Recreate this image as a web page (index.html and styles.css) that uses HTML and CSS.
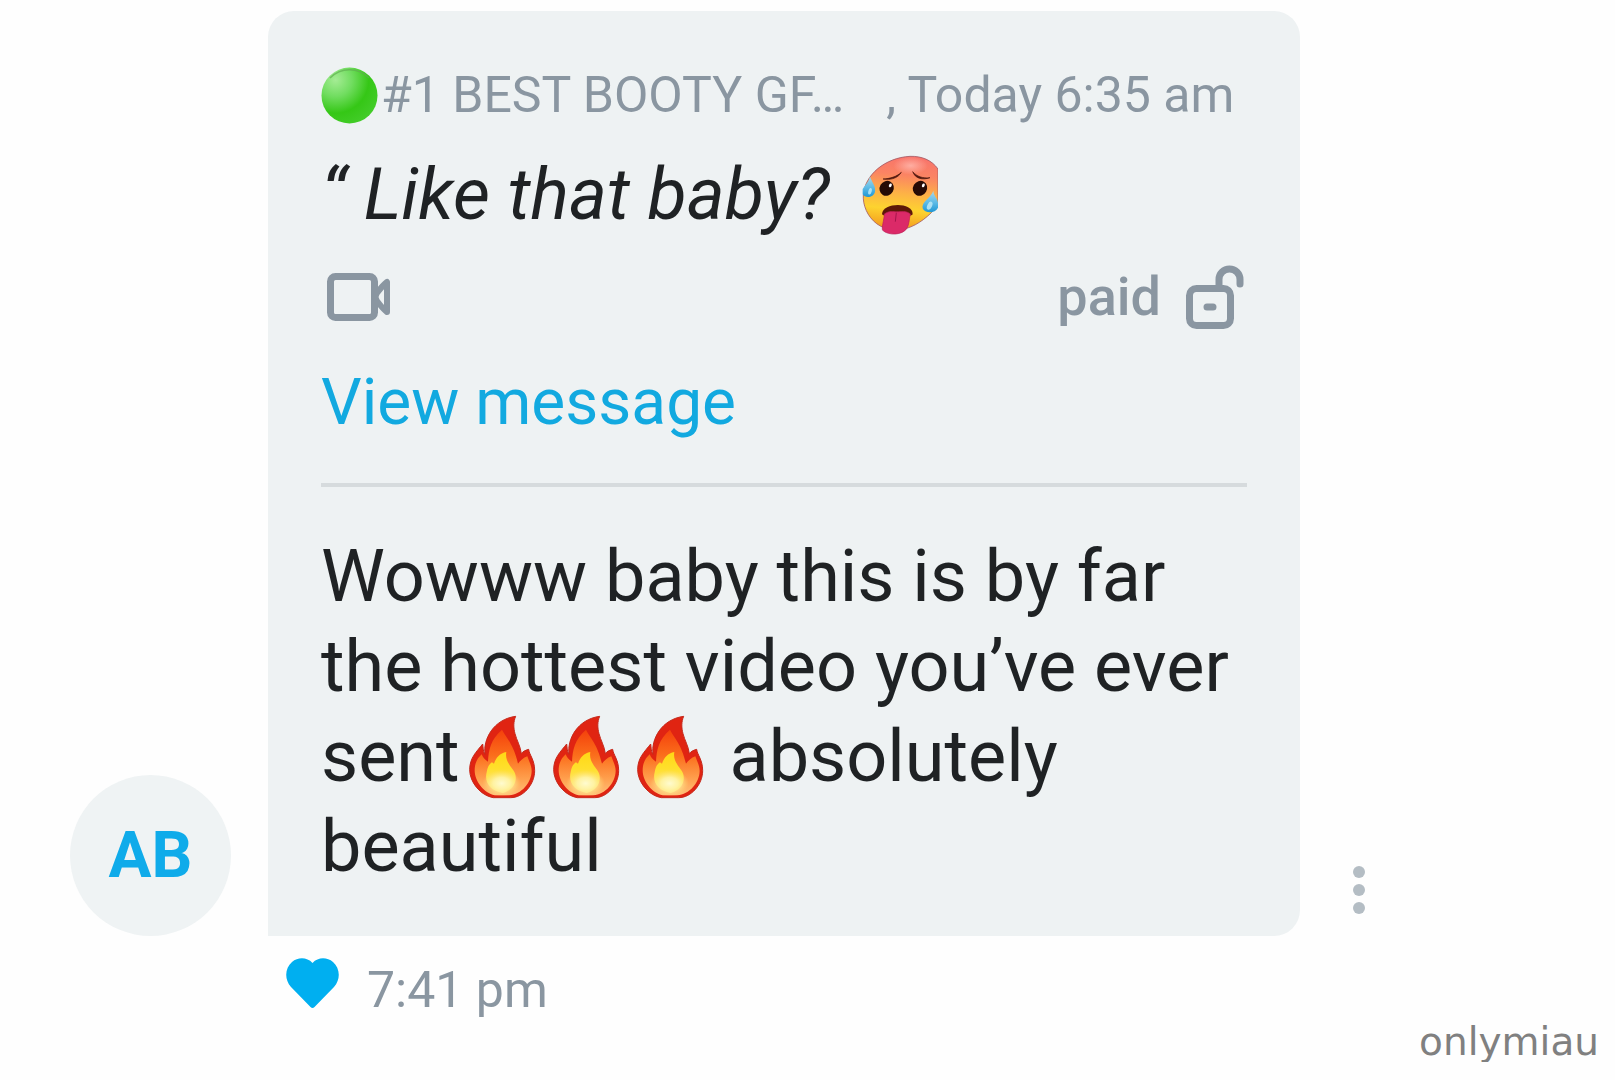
FILE: index.html
```html
<!DOCTYPE html>
<html lang="en">
<head>
<meta charset="utf-8">
<meta name="viewport" content="width=device-width, initial-scale=1">
<title>Messages</title>
<link rel="stylesheet" href="styles.css">
</head>
<body>
<svg class="defs" aria-hidden="true">
  <defs>
    <radialGradient id="ball" cx="0.25" cy="0.22" r="0.85">
      <stop offset="0" stop-color="#a5ec95"/>
      <stop offset="0.35" stop-color="#71dd60"/>
      <stop offset="0.7" stop-color="#35c716"/>
      <stop offset="1" stop-color="#42cc28"/>
    </radialGradient>
    <linearGradient id="face" x1="0.55" y1="0" x2="0.45" y2="1">
      <stop offset="0" stop-color="#f8746b"/>
      <stop offset="0.25" stop-color="#fb8463"/>
      <stop offset="0.5" stop-color="#fdb246"/>
      <stop offset="0.72" stop-color="#fdd32f"/>
      <stop offset="1" stop-color="#f2971c"/>
    </linearGradient>
    <radialGradient id="shine" cx="0.5" cy="0.5" r="0.5">
      <stop offset="0" stop-color="#ffb3a8" stop-opacity="0.9"/>
      <stop offset="1" stop-color="#ffb3a8" stop-opacity="0"/>
    </radialGradient>
    <linearGradient id="drop" x1="0" y1="0" x2="0" y2="1">
      <stop offset="0" stop-color="#a9d8ea"/>
      <stop offset="0.55" stop-color="#5dbbe6"/>
      <stop offset="1" stop-color="#1f97d4"/>
    </linearGradient>
    <linearGradient id="flame-mid" x1="0" y1="0" x2="0" y2="1">
      <stop offset="0" stop-color="#f4400c"/>
      <stop offset="0.4" stop-color="#fb6f1c"/>
      <stop offset="0.75" stop-color="#ffa04e"/>
      <stop offset="1" stop-color="#ffc07a"/>
    </linearGradient>
    <linearGradient id="flame-core" x1="0" y1="0" x2="0" y2="1">
      <stop offset="0" stop-color="#ffd814"/>
      <stop offset="0.4" stop-color="#ffdf2c"/>
      <stop offset="1" stop-color="#ffe98c"/>
    </linearGradient>
    <radialGradient id="flame-glow" cx="0.5" cy="0.5" r="0.5">
      <stop offset="0" stop-color="#fffbd0"/>
      <stop offset="0.45" stop-color="#fff4a8" stop-opacity="0.9"/>
      <stop offset="1" stop-color="#ffe070" stop-opacity="0"/>
    </radialGradient>
    <symbol id="flame" viewBox="0 42 252 252">
      <path d="M167 46C160 62 160 80 165 98C170 118 181 134 184 158C188 152 195 148 206 145C208 162 224 176 224 209C224 250 190 290 152 290H100C62 284 29 244 29 206C29 170 50 152 68 129C70 138 68 150 75 160C69 115 100 55 167 46Z" fill="#e02412" stroke="#c52a1c" stroke-width="3"/>
      <path d="M126 86C138 110 160 128 174 188C180 180 190 170 202 166C206 180 215 192 215 210C214 246 184 280 148 283H104C72 276 44 242 44 208C44 184 54 170 65 160C68 168 74 176 84 182C86 146 92 116 126 86Z" fill="url(#flame-mid)"/>
      <path d="M139 153C136 170 142 182 150 194L160 208C176 230 166 266 128 276C92 270 72 246 80 214Q84 190 96 184L102 188C108 170 120 156 139 153Z" fill="url(#flame-core)"/>
      <ellipse cx="125" cy="247" rx="58" ry="40" fill="url(#flame-glow)"/>
    </symbol>
  </defs>
</svg>

<main class="chat">
  <article class="message">
    <div class="avatar">AB</div>

    <div class="bubble">
      <blockquote class="quote">
        <header class="quote-head">
          <svg class="status" viewBox="0 0 57 57" role="img" aria-label="Online">
            <circle cx="28.5" cy="28.5" r="28" fill="url(#ball)"/>
            <path d="M9 11A27 27 0 0 1 48 11" fill="none" stroke="#5fae50" stroke-width="1.5" opacity="0.7"/>
          </svg>
          <span class="name">#1 BEST BOOTY GF…</span>
          <span>, Today 6:35 am</span>
        </header>
        <p class="quote-text">“ Like that baby? <svg class="hot-face" viewBox="36 30 228 240" role="img" aria-label="Hot face">
            <path d="M180 34C215 33 245 45 264 72V180C240 212 204 240 170 250C140 260 105 255 80 236C52 215 38 180 40 150C44 90 105 38 180 34Z" fill="url(#face)" stroke="#a35b66" stroke-width="2.5"/>
            <ellipse cx="182" cy="62" rx="52" ry="27" fill="url(#shine)"/>
            <path d="M99 102C120 101 140 95 154 82C144 99 124 106 99 102ZM188 80C200 94 218 101 240 98C217 106 196 101 188 80Z" fill="#50180f" stroke="#50180f" stroke-width="2"/>
            <ellipse cx="110" cy="130" rx="21" ry="23" transform="rotate(30 110 130)" fill="#260b05"/>
            <ellipse cx="210" cy="130" rx="21" ry="23" transform="rotate(30 210 130)" fill="#260b05"/>
            <ellipse cx="121" cy="121" rx="4" ry="6" transform="rotate(25 121 121)" fill="#fff"/>
            <ellipse cx="220" cy="121" rx="4" ry="6" transform="rotate(25 220 121)" fill="#fff"/>
            <path d="M96 207C98 172 188 170 188 207C188 218 100 220 96 207Z" fill="#5c1808"/>
            <path d="M103 207C118 196 130 201 140 200C154 201 168 196 181 207C177 225 178 238 170 251C158 270 116 273 98 256C94 250 102 226 103 207Z" fill="#db2a68" stroke="#bd1d56" stroke-width="2"/>
            <path d="M139 203L136 230" stroke="#a5154b" stroke-width="3"/>
            <path d="M60 94C65 112 78 122 75 140C71 158 46 161 38 148V132C46 120 56 112 60 94Z" fill="url(#drop)"/>
            <path d="M250 137C251 153 264 162 264 174V188C256 206 224 206 218 190C213 171 242 160 250 137Z" fill="url(#drop)"/>
            <ellipse cx="239" cy="182" rx="7" ry="13" transform="rotate(25 239 182)" fill="#c4ecf8" opacity="0.8"/>
            <ellipse cx="60" cy="139" rx="5" ry="10" transform="rotate(15 60 139)" fill="#c4ecf8" opacity="0.8"/>
          </svg></p>
        <div class="media">
          <svg class="video" viewBox="0 0 64 48" role="img" aria-label="Video">
            <rect x="3.500" y="3.500" width="44" height="41" rx="5"/>
            <path d="M60 9V39C56 36 53 32 50 28Q47 24 50 20C53 16 56 12 60 9Z" stroke-width="6"/>
          </svg>
          <span class="paid">paid
            <svg class="lock" viewBox="0 0 58 64" aria-hidden="true">
              <rect x="3.500" y="23.500" width="41" height="37" rx="7"/>
              <path d="M33 23V14.500A10.500 10.500 0 0 1 54 14.500V19M21 42H27" stroke-linecap="round"/>
            </svg>
          </span>
        </div>
        <a class="view" href="#message">View message</a>
      </blockquote>
      <p class="text">Wowww baby this is by far the hottest video you’ve ever sent<svg class="fire" role="img" aria-label="Fire"><use href="#flame"/></svg><svg class="fire" role="img" aria-label="Fire"><use href="#flame"/></svg><svg class="fire" role="img" aria-label="Fire"><use href="#flame"/></svg> absolutely beautiful</p>
    </div>

    <button class="more" type="button" aria-label="Message options">
      <svg viewBox="0 0 12 48" aria-hidden="true"><circle cx="6" cy="6" r="6"/><circle cx="6" cy="24" r="6"/><circle cx="6" cy="42" r="6"/></svg>
    </button>

    <div class="meta">
      <button class="like" type="button" aria-label="Unlike">
        <svg viewBox="0 0 53 50" aria-hidden="true"><path d="M26.500 5C32 -1 41 -1 47 4C54 10 55 21 48 29L28.500 49Q26.500 51 24.500 49L5 29C-2 21 -1 10 6 4C12 -1 21 -1 26.500 5Z"/></svg>
      </button>
      <time>7:41 pm</time>
    </div>
  </article>
</main>
<footer class="credit">onlymiau</footer>
</body>
</html>
```
FILE: styles.css
```css
* {
  box-sizing: border-box;
}

body {
  margin: 0;
  background: #fefefe;
  color: #1f2224;
  font-family: Roboto, sans-serif;
}

p,
blockquote {
  margin: 0;
}

button {
  display: block;
  padding: 0;
  border: 0;
  background: none;
  cursor: pointer;
}

svg {
  flex: none;
}

.defs {
  position: absolute;
  width: 0;
  height: 0;
}

.chat {
  padding: 11px 250px 0 70px;
}

.message {
  display: grid;
  grid-template-columns: 161px minmax(0, 1fr) 12px;
  align-items: end;
}

.avatar {
  display: flex;
  align-items: center;
  justify-content: center;
  width: 161px;
  height: 161px;
  border-radius: 50%;
  background: #eff3f4;
  color: #0fabea;
  font-size: 64px;
  font-weight: 700;
}

.bubble {
  margin: 0 53px 0 37px;
  padding: 54px 53px 44px;
  border-radius: 26px 26px 26px 0;
  background: #eef2f3;
}

.quote {
  padding-bottom: 44px;
  border-bottom: 4px solid #d6dbdd;
}

.quote-head {
  display: flex;
  align-items: center;
  height: 60px;
  color: #8a96a1;
  font-size: 50px;
  line-height: 60px;
  white-space: nowrap;
}

.status {
  width: 57px;
  height: 57px;
  margin-right: 3px;
}

.name {
  margin-right: 42px;
}

.quote-text {
  height: 90px;
  margin-top: 25px;
  font-size: 72px;
  font-style: italic;
  line-height: 90px;
}

.hot-face {
  width: 76px;
  height: 80px;
  margin-left: 15px;
  vertical-align: -16px;
}

.media {
  display: flex;
  align-items: center;
  justify-content: space-between;
  height: 64px;
  margin-top: 25px;
  padding: 0 3px 0 6px;
  color: #8a96a1;
}

.video,
.lock {
  fill: none;
  stroke: currentColor;
  stroke-width: 7px;
  stroke-linejoin: round;
}

.video {
  width: 64px;
  height: 48px;
}

.paid {
  display: flex;
  align-items: center;
  gap: 25px;
  font-size: 54px;
  font-weight: 500;
  line-height: 64px;
}

.lock {
  width: 58px;
  height: 64px;
}

.view {
  display: block;
  width: fit-content;
  margin-top: 38px;
  color: #12a9e0;
  font-size: 64px;
  line-height: 72px;
  text-decoration: none;
}

.text {
  padding-top: 45px;
  font-size: 72px;
  line-height: 90px;
}

.fire {
  width: 84px;
  height: 84px;
  vertical-align: -18px;
}

.more {
  width: 12px;
  height: 48px;
  margin-bottom: 22px;
}

.more svg {
  display: block;
  width: 12px;
  height: 48px;
  fill: #b4bdc4;
}

.meta {
  display: flex;
  grid-column: 2;
  gap: 28px;
  margin: 22px 0 0 55px;
  color: #8a96a1;
  font-size: 50px;
  line-height: 64px;
}

.like svg {
  display: block;
  width: 53px;
  height: 50px;
  margin-bottom: 14px;
  fill: #00aff0;
}

.credit {
  padding-right: 16px;
  color: #808080;
  font-family: "DejaVu Sans", sans-serif;
  font-size: 39px;
  line-height: 40px;
  text-align: right;
}
```
